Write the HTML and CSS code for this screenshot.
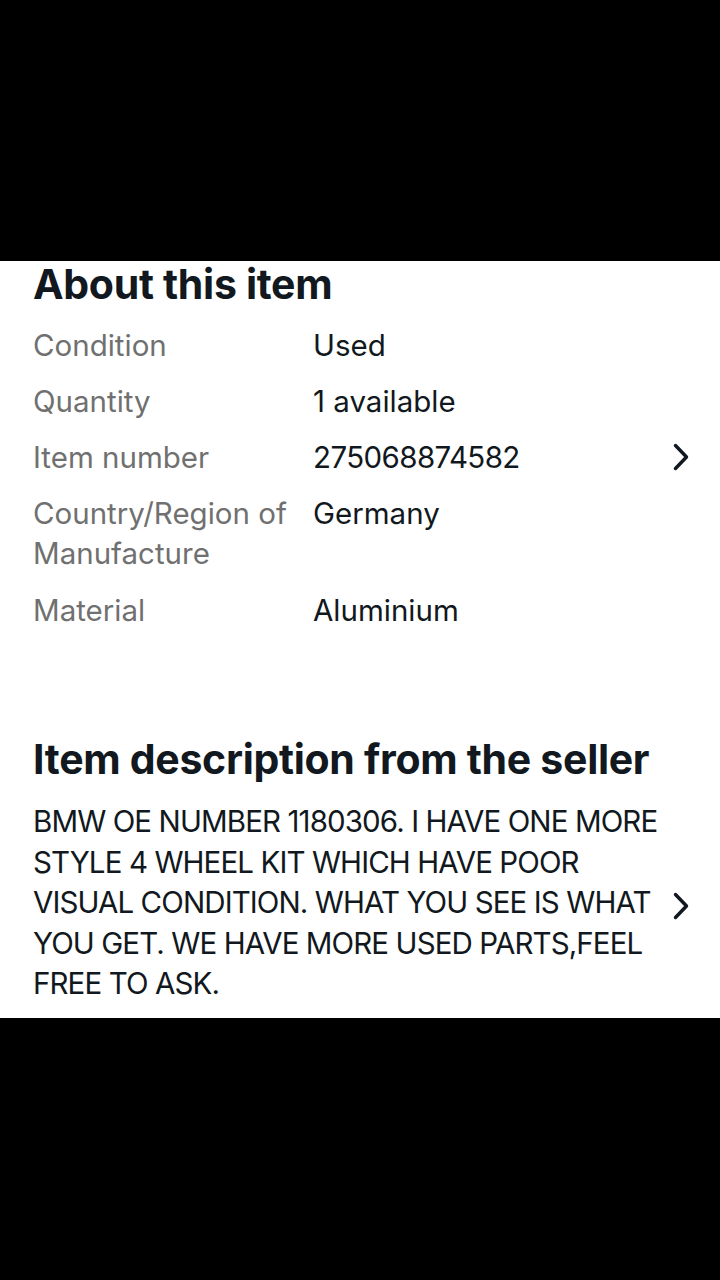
FILE: index.html
```html
<!DOCTYPE html>
<html>
<head>
<meta charset="utf-8">
<link rel="stylesheet" href="styles.css">
</head>
<body>
<div class="top-band"></div>
<main class="sheet">
  <section class="about">
    <h2 class="title">About this item</h2>
    <div class="specs">
      <div class="row"><div class="label">Condition</div><div class="value">Used</div></div>
      <div class="row"><div class="label">Quantity</div><div class="value">1 available</div></div>
      <div class="row with-arrow"><div class="label">Item number</div><div class="value num">275068874582</div>
        <svg class="chev" viewBox="0 0 18 30"><path d="M3.5 3.5 L14.5 15 L3.5 26.5"/></svg></div>
      <div class="row"><div class="label">Country/Region of Manufacture</div><div class="value">Germany</div></div>
      <div class="row row-last"><div class="label">Material</div><div class="value">Aluminium</div></div>
    </div>
  </section>
  <section class="desc">
    <h2 class="title">Item description from the seller</h2>
    <div class="desc-row">
      <p class="desc-text">BMW OE NUMBER 1180306. I HAVE ONE MORE STYLE 4 WHEEL KIT WHICH HAVE POOR VISUAL CONDITION. WHAT YOU SEE IS WHAT YOU GET. WE HAVE MORE USED PARTS,FEEL FREE TO ASK.</p>
      <svg class="chev" viewBox="0 0 18 30"><path d="M3.5 3.5 L14.5 15 L3.5 26.5"/></svg>
    </div>
  </section>
</main>
</body>
</html>
```
FILE: styles.css
```css
html, body {
  margin: 0;
  padding: 0;
  background: #000;
  width: 720px;
  height: 1280px;
  overflow: hidden;
}
.top-band { height: 261px; }
.sheet {
  background: #fff;
  height: 757px;
  box-sizing: border-box;
  padding: 0 30px 0 33px;
  font-family: Inter, "Noto Sans", sans-serif;
  color: #111820;
}
.title {
  margin: 0;
  font-size: 41px;
  font-weight: 700;
  line-height: 46px;
  letter-spacing: -0.3px;
}
.specs {
  margin-top: 18px;
  display: flex;
  flex-direction: column;
  gap: 16px;
}
.row {
  display: flex;
  align-items: flex-start;
  font-size: 29.5px;
  line-height: 40px;
  position: relative;
}
.row-last { margin-top: 1px; }
.label {
  width: 280px;
  color: #707070;
}
.value { color: #111820; }
.num { letter-spacing: -0.6px; }
.chev {
  width: 18px;
  height: 30px;
  fill: none;
  stroke: #111820;
  stroke-width: 3.4;
  stroke-linecap: round;
  stroke-linejoin: round;
}
.with-arrow .chev {
  position: absolute;
  right: 0;
  top: 5px;
}
.desc { margin-top: 106px; }
.desc-row {
  margin-top: 19px;
  display: flex;
  align-items: center;
  gap: 10px;
}
.desc-text {
  margin: 0;
  flex: 1;
  font-size: 29.5px;
  line-height: 40.5px;
  letter-spacing: -0.9px;
  color: #111820;
}
.desc-row .chev { flex: none; margin-top: 8px; }
```
